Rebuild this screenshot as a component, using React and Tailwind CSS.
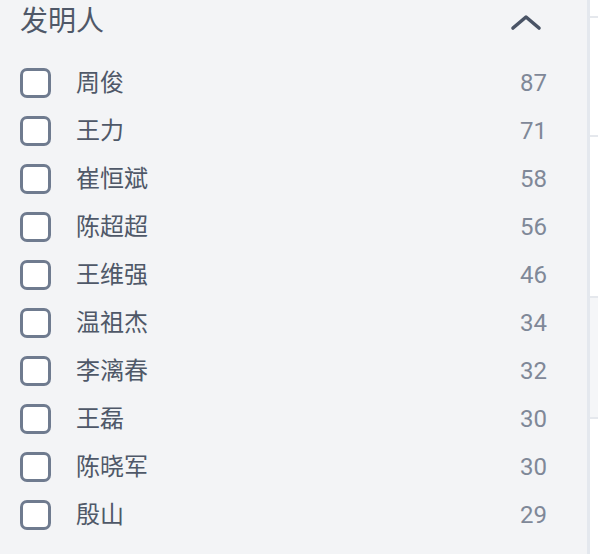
const inventors = [
  { name: "周俊", count: 87 },
  { name: "王力", count: 71 },
  { name: "崔恒斌", count: 58 },
  { name: "陈超超", count: 56 },
  { name: "王维强", count: 46 },
  { name: "温祖杰", count: 34 },
  { name: "李漓春", count: 32 },
  { name: "王磊", count: 30 },
  { name: "陈晓军", count: 30 },
  { name: "殷山", count: 29 },
];

function ChevronUp() {
  return (
    <svg width="32" height="18" viewBox="0 0 32 18" fill="none">
      <path
        d="M3 15 L16 4 L29 15"
        stroke="#4a5466"
        strokeWidth="3.6"
        strokeLinecap="round"
        strokeLinejoin="round"
      />
    </svg>
  );
}

export default function App() {
  return (
    <div
      className="flex h-[554px] w-[598px] overflow-hidden bg-[#f3f4f6]"
      style={{ fontFamily: 'Roboto, "Noto Sans CJK SC", sans-serif' }}
    >
      <section className="flex w-[590px] shrink-0 flex-col border-r-[3px] border-[#e4e8ee] pl-[20px] pr-[40px]">
        <div className="flex h-[44px] items-center justify-between">
          <h2 className="text-[28px] leading-none text-[#4f5868]">发明人</h2>
          <button className="mr-[5px] flex items-center" type="button">
            <ChevronUp />
          </button>
        </div>

        <ul className="mt-[15px] flex flex-col">
          {inventors.map((item) => (
            <li key={item.name} className="flex h-[48px] items-center">
              <span className="h-[30px] w-[31px] shrink-0 rounded-[7px] border-[3px] border-[#6f7b8f] bg-white" />
              <span className="ml-[25px] flex-1 text-[24px] leading-none text-[#4f5868]">
                {item.name}
              </span>
              <span className="text-[24px] leading-none text-[#7f8898]">
                {item.count}
              </span>
            </li>
          ))}
        </ul>
      </section>

      <aside className="flex flex-1 flex-col bg-white">
        <div className="h-[16px]" />
        <div className="h-[2px] bg-[#e5e8ed]" />
        <div className="h-[117px]" />
        <div className="h-[2px] bg-[#e5e8ed]" />
        <div className="h-[159px]" />
        <div className="h-[2px] bg-[#e5e8ed]" />
        <div className="h-[119px] bg-[#f5f6f8]" />
        <div className="h-[2px] bg-[#e5e8ed]" />
        <div className="flex-1" />
      </aside>
    </div>
  );
}
